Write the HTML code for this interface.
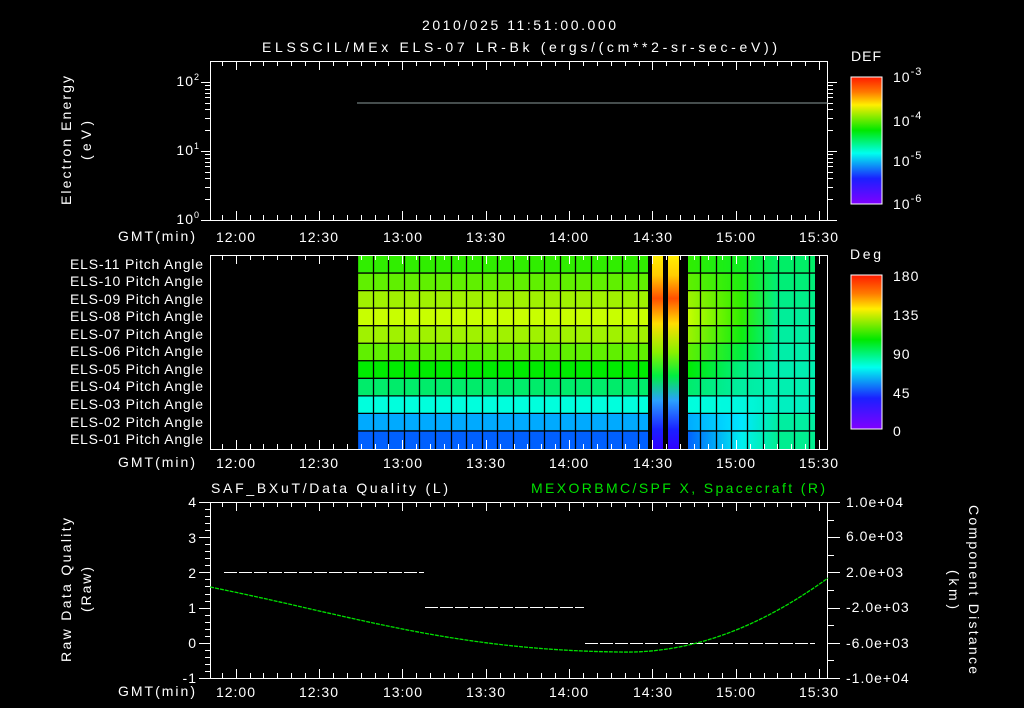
<!DOCTYPE html>
<html><head><meta charset="utf-8"><style>
html,body{margin:0;padding:0;background:#000;width:1024px;height:708px;overflow:hidden}
svg{display:block}
text{font-family:"Liberation Sans",sans-serif;fill:#fff;font-size:14px;letter-spacing:1px}
</style></head><body>
<svg width="1024" height="708" viewBox="0 0 1024 708" xmlns="http://www.w3.org/2000/svg">
<defs>
<linearGradient id="cb" x1="0" y1="0" x2="0" y2="1">
<stop offset="0" stop-color="#ff1a00"/><stop offset="0.12" stop-color="#ff7a00"/><stop offset="0.22" stop-color="#ffee00"/><stop offset="0.42" stop-color="#00e800"/><stop offset="0.6" stop-color="#00ffee"/><stop offset="0.8" stop-color="#1a20ff"/><stop offset="1" stop-color="#8000ff"/>
</linearGradient>
<linearGradient id="st" x1="0" y1="0" x2="0" y2="1">
<stop offset="0" stop-color="#ffee00"/><stop offset="0.1" stop-color="#ffcc00"/><stop offset="0.22" stop-color="#ff5000"/><stop offset="0.35" stop-color="#ffdd00"/><stop offset="0.5" stop-color="#88f000"/><stop offset="0.62" stop-color="#00ee40"/><stop offset="0.75" stop-color="#2aa0ff"/><stop offset="0.9" stop-color="#1a20ff"/><stop offset="1" stop-color="#3000ff"/>
</linearGradient>
</defs>
<g id="heat"></g>
<g id="draw" stroke="#fff" stroke-width="1" fill="none"></g>
<line x1="357" y1="103" x2="828" y2="103" stroke="#8a9a9a" stroke-width="1"/>
<rect x="851" y="77" width="31" height="127" fill="url(#cb)" stroke="#fff"/>
<rect x="851" y="275" width="31" height="154" fill="url(#cb)" stroke="#fff"/>
<g stroke="#fff" stroke-width="1" stroke-dasharray="13,2">
<line x1="224" y1="572.5" x2="424" y2="572.5"/>
<line x1="425" y1="607.5" x2="584" y2="607.5"/>
<line x1="585" y1="643.5" x2="815" y2="643.5"/>
</g>
<path d="M210,587 C350,615 450,650 620,652 C700,654 770,620 828,578" stroke="#00e000" stroke-width="1.3" fill="none" stroke-dasharray="4,1"/>
<text x="422" y="30" font-size="16" textLength="195" lengthAdjust="spacing">2010/025 11:51:00.000</text>
<text x="262" y="52" font-size="16" textLength="516" lengthAdjust="spacing">ELSSCIL/MEx ELS-07 LR-Bk  (ergs/(cm**2-sr-sec-eV))</text>
<text x="851" y="61" font-size="16" textLength="31" lengthAdjust="spacing">DEF</text>
<text x="850" y="259" font-size="16" textLength="32" lengthAdjust="spacing">Deg</text>
<g font-size="16">
<text x="893" y="82">10<tspan dy="-7" font-size="11">-3</tspan></text>
<text x="893" y="126">10<tspan dy="-7" font-size="11">-4</tspan></text>
<text x="893" y="166">10<tspan dy="-7" font-size="11">-5</tspan></text>
<text x="893" y="209">10<tspan dy="-7" font-size="11">-6</tspan></text>
<text x="893" y="281">180</text><text x="893" y="320">135</text><text x="893" y="359">90</text><text x="893" y="398">45</text><text x="893" y="436">0</text>
</g>
<g font-size="14" text-anchor="end">
<text x="200" y="86">10<tspan dy="-6" font-size="9">2</tspan></text>
<text x="200" y="155">10<tspan dy="-6" font-size="9">1</tspan></text>
<text x="200" y="224">10<tspan dy="-6" font-size="9">0</tspan></text>
</g>
<g font-size="14">
<text x="70" y="269" textLength="134" lengthAdjust="spacing">ELS-11 Pitch Angle</text>
<text x="70" y="286" textLength="134" lengthAdjust="spacing">ELS-10 Pitch Angle</text>
<text x="70" y="304" textLength="134" lengthAdjust="spacing">ELS-09 Pitch Angle</text>
<text x="70" y="321" textLength="134" lengthAdjust="spacing">ELS-08 Pitch Angle</text>
<text x="70" y="339" textLength="134" lengthAdjust="spacing">ELS-07 Pitch Angle</text>
<text x="70" y="356" textLength="134" lengthAdjust="spacing">ELS-06 Pitch Angle</text>
<text x="70" y="374" textLength="134" lengthAdjust="spacing">ELS-05 Pitch Angle</text>
<text x="70" y="391" textLength="134" lengthAdjust="spacing">ELS-04 Pitch Angle</text>
<text x="70" y="409" textLength="134" lengthAdjust="spacing">ELS-03 Pitch Angle</text>
<text x="70" y="427" textLength="134" lengthAdjust="spacing">ELS-02 Pitch Angle</text>
<text x="70" y="444" textLength="134" lengthAdjust="spacing">ELS-01 Pitch Angle</text>
</g>
<g font-size="14">
<text x="118" y="241" textLength="78" lengthAdjust="spacing">GMT(min)</text>
<text x="118" y="467" textLength="78" lengthAdjust="spacing">GMT(min)</text>
<text x="118" y="696" textLength="78" lengthAdjust="spacing">GMT(min)</text>
</g>
<g font-size="15" text-anchor="middle">
<text x="236" y="242">12:00</text><text x="319" y="242">12:30</text><text x="403" y="242">13:00</text><text x="486" y="242">13:30</text><text x="569" y="242">14:00</text><text x="653" y="242">14:30</text><text x="736" y="242">15:00</text><text x="819" y="242">15:30</text>
<text x="236" y="468">12:00</text><text x="319" y="468">12:30</text><text x="403" y="468">13:00</text><text x="486" y="468">13:30</text><text x="569" y="468">14:00</text><text x="653" y="468">14:30</text><text x="736" y="468">15:00</text><text x="819" y="468">15:30</text>
<text x="236" y="697">12:00</text><text x="319" y="697">12:30</text><text x="403" y="697">13:00</text><text x="486" y="697">13:30</text><text x="569" y="697">14:00</text><text x="653" y="697">14:30</text><text x="736" y="697">15:00</text><text x="819" y="697">15:30</text>
</g>
<text x="211" y="493" font-size="16" textLength="238" lengthAdjust="spacing">SAF_BXuT/Data Quality (L)</text>
<text x="531" y="493" font-size="16" textLength="295" lengthAdjust="spacing" style="fill:#00e000">MEXORBMC/SPF X, Spacecraft (R)</text>
<g font-size="14" text-anchor="end">
<text x="197" y="507">4</text><text x="197" y="543">3</text><text x="197" y="578">2</text><text x="197" y="613">1</text><text x="197" y="648">0</text><text x="197" y="683">-1</text>
</g>
<g font-size="13">
<text x="846" y="507">1.0e+04</text><text x="846" y="541">6.0e+03</text><text x="846" y="577">2.0e+03</text><text x="846" y="612">-2.0e+03</text><text x="846" y="648">-6.0e+03</text><text x="846" y="683">-1.0e+04</text>
</g>
<g font-size="16">
<text transform="translate(71,205) rotate(-90)" textLength="130" lengthAdjust="spacing">Electron Energy</text>
<text transform="translate(91,160) rotate(-90)" textLength="40" lengthAdjust="spacing">(eV)</text>
<text transform="translate(71,662) rotate(-90)" textLength="145" lengthAdjust="spacing">Raw Data Quality</text>
<text transform="translate(91,612) rotate(-90)" textLength="46" lengthAdjust="spacing">(Raw)</text>
<text transform="translate(969,505) rotate(90)" textLength="170" lengthAdjust="spacing">Component Distance</text>
<text transform="translate(949,570) rotate(90)" textLength="40" lengthAdjust="spacing">(km)</text>
</g>
<script>
var NS="http://www.w3.org/2000/svg";
function el(p,t,a){var e=document.createElementNS(NS,t);for(var k in a)e.setAttribute(k,a[k]);p.appendChild(e);return e;}
var H=document.getElementById('heat'),D=document.getElementById('draw');
var defs=document.querySelector('defs');
var L=['#30ee00','#60f000','#a0f200','#c8ff00','#a0f200','#60f000','#00ec00','#00ec6a','#00ffdd','#00aaff','#0060ff'];
var R=['#00ee66','#00ee77','#00ee88','#00ee99','#00eea0','#00eea8','#00eeb0','#00f0b0','#00f0c0','#00eea0','#00ee90'];
var M=['#10ee20','#20ee10','#30ee00','#30ee00','#10ee10','#00ee40','#00ee80','#00eea0','#00f8e0','#00e8ff','#00f0f0'];
var y0=255.5,rh=(448.5-255.5)/11;
for(var i=0;i<11;i++){
 var g=el(defs,'linearGradient',{id:'r'+i,x1:'357',x2:'815',y1:'0',y2:'0',gradientUnits:'userSpaceOnUse'});
 el(g,'stop',{offset:'0','stop-color':L[i]});el(g,'stop',{offset:'0.72','stop-color':L[i]});
 el(g,'stop',{offset:'0.84','stop-color':M[i]});el(g,'stop',{offset:'0.92','stop-color':R[i]});el(g,'stop',{offset:'1','stop-color':R[i]});
 el(H,'rect',{x:357,y:y0+i*rh,width:458,height:rh+0.5,fill:'url(#r'+i+')'});
}
el(H,'rect',{x:648,y:256,width:40,height:193,fill:'#000'});
el(H,'rect',{x:652,y:256,width:11,height:193,fill:'url(#st)'});
el(H,'rect',{x:668,y:256,width:11,height:193,fill:'url(#st)'});
for(var x=357;x<=815;x+=15.6){ if(x>647&&x<688)continue; el(H,'line',{x1:Math.round(x)+.5,y1:256,x2:Math.round(x)+.5,y2:449,stroke:'#000','stroke-width':1.3});}
for(var i=1;i<11;i++){var yy=y0+i*rh; el(H,'line',{x1:357,y1:yy,x2:648,y2:yy,stroke:'#000','stroke-width':1.3});el(H,'line',{x1:688,y1:yy,x2:815,y2:yy,stroke:'#000','stroke-width':1.3});}
var P=[[61,220],[255,449],[502,678]];
var px=function(m){return 235.7+m*2.778;};
P.forEach(function(p,j){
 el(D,'rect',{x:210.5,y:p[0]+.5,width:617,height:p[1]-p[0]});
 for(var m=-5;m<=210;m+=5){var x=Math.round(px(m))+.5;if(x<211||x>827)continue;var len=(m%30==0)?9:5;
  el(D,'line',{x1:x,y1:p[0],x2:x,y2:p[0]+len});el(D,'line',{x1:x,y1:p[1],x2:x,y2:p[1]-len});}
});
[0,1].forEach(function(d){for(var k=1;k<=10;k++){var y=220-69*(d+Math.log10(k));var len=(k==1||k==10)?9:5;var yy=Math.round(y)+.5;
 el(D,'line',{x1:210,y1:yy,x2:210-len,y2:yy});el(D,'line',{x1:828,y1:yy,x2:828+len,y2:yy});}});
el(D,'line',{x1:201,y1:220.5,x2:210,y2:220.5});
for(var v=-1;v<=4.001;v+=0.2){var y=Math.round(678-(v+1)*35.2)+.5;var maj=Math.abs(v-Math.round(v))<0.01;
 el(D,'line',{x1:210,y1:y,x2:maj?199:205,y2:y});}
for(var k=0;k<=10;k++){var y=Math.round(502+k*17.6)+.5;var maj=k%2==0;el(D,'line',{x1:828,y1:y,x2:maj?840:834,y2:y});}
for(var k=1;k<12;k++){var y=Math.round(77+k*127/12)+.5;el(D,'line',{x1:882,y1:y,x2:877,y2:y});}
for(var k=1;k<16;k++){var y=Math.round(275+k*154/16)+.5;el(D,'line',{x1:882,y1:y,x2:877,y2:y});}
</script>
</svg>
</body></html>
